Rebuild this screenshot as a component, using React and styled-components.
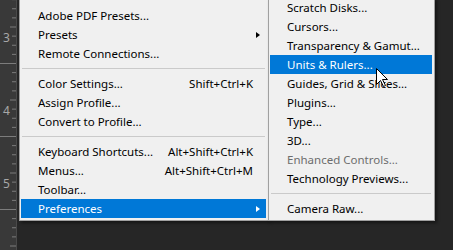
import React from 'react';
import styled, { createGlobalStyle } from 'styled-components';

const GlobalStyle = createGlobalStyle`
  html, body {
    margin: 0;
    padding: 0;
    background: #262626;
    overflow: hidden;
  }
  body {
    font-family: "Noto Sans", "Open Sans", sans-serif;
  }
`;

const Stage = styled.div`
  position: relative;
  display: flex;
  align-items: flex-start;
  width: 453px;
  height: 250px;
  background: #262626;
  overflow: hidden;
`;

const RulerStrip = styled.div`
  flex: none;
  width: 16px;
  height: 250px;
  margin-right: 2px;
  background: #393939;
  border-right: 1px solid #4a4a4a;
`;

const Menu = styled.div`
  flex: none;
  box-sizing: border-box;
  width: ${(p) => p.$width}px;
  margin-top: ${(p) => p.$top}px;
  margin-left: ${(p) => p.$overlap || 0}px;
  padding: ${(p) => p.$padTop || 0}px 1px 2px 1px;
  background: #f0f0f0;
  border: 1px solid #a0a0a0;
  border-top: none;
  box-shadow: 2px 2px 3px rgba(0, 0, 0, 0.45);
  position: relative;
  z-index: ${(p) => p.$z || 1};
`;

const Row = styled.div`
  display: flex;
  align-items: center;
  height: 19px;
  padding: 0 8px 0 17px;
  margin-right: ${(p) => p.$inset || 0}px;
  font-size: 11.5px;
  color: ${(p) => (p.$active ? '#ffffff' : p.$disabled ? '#6d6d6d' : '#000000')};
  background: ${(p) => (p.$active ? '#0078d7' : 'transparent')};
  white-space: nowrap;
`;

const Label = styled.span`
  flex: 1;
`;

const Shortcut = styled.span`
  margin-right: 5px;
`;

const Arrow = styled.span`
  width: 0;
  height: 0;
  margin-right: -2px;
  border-top: 3.5px solid transparent;
  border-bottom: 3.5px solid transparent;
  border-left: 4px solid ${(p) => (p.$active ? '#ffffff' : '#000000')};
`;

const Separator = styled.div`
  height: 11px;
  display: flex;
  align-items: center;
  padding: 0 1px 0 1px;
  margin-right: ${(p) => p.$inset || 0}px;

  &::after {
    content: '';
    flex: 1;
    height: 1px;
    background: #cacaca;
  }
`;

const Pointer = styled.svg`
  position: absolute;
  left: 376px;
  top: 68px;
  z-index: 5;
`;

const mainItems = [
  { label: 'Adobe PDF Presets...' },
  { label: 'Presets', sub: true },
  { label: 'Remote Connections...' },
  { sep: true },
  { label: 'Color Settings...', key: 'Shift+Ctrl+K' },
  { label: 'Assign Profile...' },
  { label: 'Convert to Profile...' },
  { sep: true },
  { label: 'Keyboard Shortcuts...', key: 'Alt+Shift+Ctrl+K' },
  { label: 'Menus...', key: 'Alt+Shift+Ctrl+M' },
  { label: 'Toolbar...' },
  { label: 'Preferences', sub: true, active: true },
];

const prefItems = [
  { label: 'Scratch Disks...' },
  { label: 'Cursors...' },
  { label: 'Transparency & Gamut...' },
  { label: 'Units & Rulers...', active: true },
  { label: 'Guides, Grid & Slices...' },
  { label: 'Plugins...' },
  { label: 'Type...' },
  { label: '3D...' },
  { label: 'Enhanced Controls...', disabled: true },
  { label: 'Technology Previews...' },
  { sep: true },
  { label: 'Camera Raw...' },
];

const Ruler = () => {
  const ticks = [];
  for (let i = 0; i < 30; i++) {
    const y = -10 + i * 9.125;
    const big = i % 8 === 0;
    const mid = i % 4 === 0;
    ticks.push(
      <line key={i} x1={big ? 0 : mid ? 10 : 12} x2="16" y1={y + 0.5} y2={y + 0.5} stroke="#7c7c7c" strokeWidth="1" />
    );
  }
  return (
    <RulerStrip>
      <svg width="16" height="250">
        {ticks}
        {[['3', 42], ['4', 115], ['5', 188]].map(([n, y]) => (
          <text key={n} x="3" y={y} fill="#a8a8a8" fontSize="12" fontFamily="Noto Sans, sans-serif">
            {n}
          </text>
        ))}
      </svg>
    </RulerStrip>
  );
};

const MenuList = ({ items, inset }) =>
  items.map((item, i) =>
    item.sep ? (
      <Separator key={i} $inset={inset} />
    ) : (
      <Row key={i} $active={item.active} $disabled={item.disabled} $inset={inset}>
        <Label>{item.label}</Label>
        {item.key && <Shortcut>{item.key}</Shortcut>}
        {item.sub && <Arrow $active={item.active} />}
      </Row>
    )
  );

export default function App() {
  return (
    <>
      <GlobalStyle />
      <Stage>
        <Ruler />
        <Menu $width={250} $top={0} $padTop={6}>
          <MenuList items={mainItems} inset={1} />
        </Menu>
        <Menu $width={167} $top={-2} $overlap={-1} $z={2}>
          <MenuList items={prefItems} inset={1} />
        </Menu>
        <Pointer width="13" height="20" viewBox="0 0 13 20">
          <path d="M0.5 0.5 L0.5 16.5 L4.5 12.5 L7.5 18.5 L9.5 17.5 L6.5 11.5 L11.5 11.5 Z" fill="#ffffff" stroke="#000000" strokeWidth="1" strokeLinejoin="round" />
        </Pointer>
      </Stage>
    </>
  );
}
